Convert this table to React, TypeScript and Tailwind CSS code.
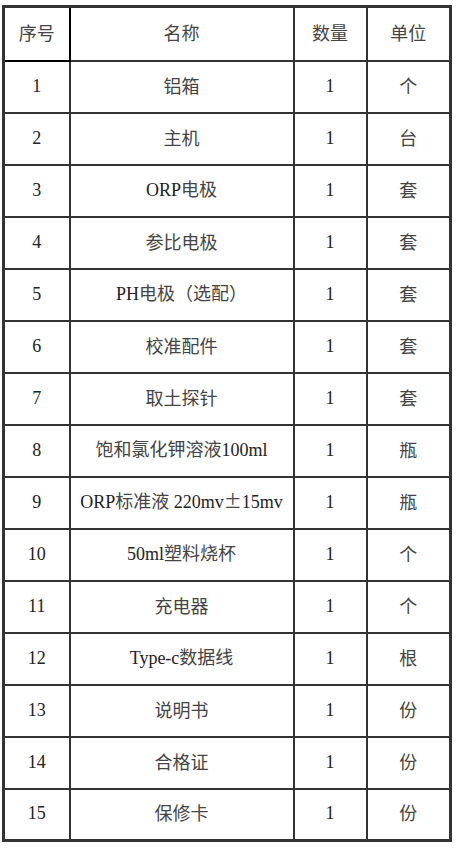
import React from "react";

const rows: [string, string, string, string][] = [
  ["1", "铝箱", "1", "个"],
  ["2", "主机", "1", "台"],
  ["3", "ORP电极", "1", "套"],
  ["4", "参比电极", "1", "套"],
  ["5", "PH电极（选配）", "1", "套"],
  ["6", "校准配件", "1", "套"],
  ["7", "取土探针", "1", "套"],
  ["8", "饱和氯化钾溶液100ml", "1", "瓶"],
  ["9", "ORP标准液 220mv±15mv", "1", "瓶"],
  ["10", "50ml塑料烧杯", "1", "个"],
  ["11", "充电器", "1", "个"],
  ["12", "Type-c数据线", "1", "根"],
  ["13", "说明书", "1", "份"],
  ["14", "合格证", "1", "份"],
  ["15", "保修卡", "1", "份"],
];

// latin runs in a serif face, CJK at full size, like SimSun
function Mixed({ text }: { text: string }) {
  const parts = text.match(/[\x20-\x7e]+|±|[^\x20-\x7e±]+/g) || [];
  return (
    <>
      {parts.map((p, i) =>
        p === "±" ? (
          <span key={i} className="inline-block w-[18px] text-center">±</span>
        ) : /^[\x20-\x7e]+$/.test(p) ? (
          <span key={i} className="text-[#222]" style={{ fontFamily: '"Liberation Serif", serif' }}>{p}</span>
        ) : (
          <span key={i}>{p}</span>
        )
      )}
    </>
  );
}

const cell = "border-2 border-[#333] text-center align-middle px-0 pt-0 pb-[4px] font-normal";

export default function App() {
  return (
    <div
      className="w-[460px] h-[848px] bg-white pt-[5px] pl-[2px] text-[#444] text-[18px] leading-none"
      style={{ fontFamily: '"Noto Sans CJK SC", "Liberation Serif", serif' }}
    >
      <table className="border-collapse border-[3px] border-[#333] w-[449px] table-fixed">
        <colgroup>
          <col className="w-[66px]" />
          <col className="w-[224px]" />
          <col className="w-[73px]" />
          <col className="w-[84px]" />
        </colgroup>
        <thead>
          <tr className="h-[54px]">
            <th className={`${cell} border-black`}><Mixed text="序号" /></th>
            <th className={cell}><Mixed text="名称" /></th>
            <th className={cell}><Mixed text="数量" /></th>
            <th className={cell}><Mixed text="单位" /></th>
          </tr>
        </thead>
        <tbody>
          {rows.map((r) => (
            <tr key={r[0]} className="h-[52px]">
              <td className={cell}><Mixed text={r[0]} /></td>
              <td className={`${cell} whitespace-pre`}><Mixed text={r[1]} /></td>
              <td className={cell}><Mixed text={r[2]} /></td>
              <td className={cell}><Mixed text={r[3]} /></td>
            </tr>
          ))}
        </tbody>
      </table>
    </div>
  );
}
